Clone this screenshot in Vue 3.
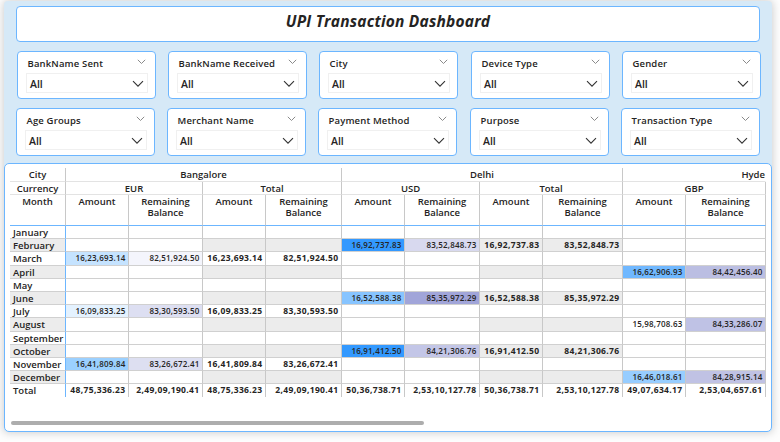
<script setup>
const slicerRows = [
  ['BankName Sent', 'BankName Received', 'City', 'Device Type', 'Gender'],
  ['Age Groups', 'Merchant Name', 'Payment Method', 'Purpose', 'Transaction Type'],
]

const cities = [
  { name: 'Bangalore', span: 4 },
  { name: 'Delhi', span: 4 },
  { name: 'Hyde', span: 2, clipped: true },
]
const currencies = ['EUR', 'Total', 'USD', 'Total', 'GBP']

const rows = [
  { month: 'January' },
  { month: 'February', usd: ['16,92,737.83', '83,52,848.73', '#3399ff', '#d8d9ef'] },
  { month: 'March', eur: ['16,23,693.14', '82,51,924.50', '#c5e3ff', '#f4f5fc'] },
  { month: 'April', gbp: ['16,62,906.93', '84,42,456.40', '#70b8ff', '#bbbee2'] },
  { month: 'May' },
  { month: 'June', usd: ['16,52,588.38', '85,35,972.29', '#87c4ff', '#a1a5d9'] },
  { month: 'July', eur: ['16,09,833.25', '83,30,593.50', '#e4f2ff', '#dddff2'] },
  { month: 'August', gbp: ['15,98,708.63', '84,33,286.07', '#ffffff', '#bfc2e5'] },
  { month: 'September' },
  { month: 'October', usd: ['16,91,412.50', '84,21,306.76', '#3399ff', '#c3c6e7'] },
  { month: 'November', eur: ['16,41,809.84', '83,26,672.41', '#9bd0ff', '#dddff1'] },
  { month: 'December', gbp: ['16,46,018.61', '84,28,915.14', '#97cdff', '#c0c2e4'] },
]
const totals = [
  '48,75,336.23', '2,49,09,190.41', '48,75,336.23', '2,49,09,190.41',
  '50,36,738.71', '2,53,10,127.78', '50,36,738.71', '2,53,10,127.78',
  '49,07,634.17', '2,53,04,657.61',
]

function cellsOf(row) {
  const heat = (v) => [0, 1].map((i) => ({ text: v ? v[i] : '', bg: v ? v[i + 2] : '#ffffff' }))
  const total = (v) => [0, 1].map((i) => ({ text: v ? v[i] : '', total: true }))
  return [...heat(row.eur), ...total(row.eur), ...heat(row.usd), ...total(row.usd), ...heat(row.gbp)]
}
</script>

<template>
  <div class="page">
    <div class="report">
      <header class="title">UPI Transaction Dashboard</header>
      <div v-for="(line, i) in slicerRows" :key="i" class="slicers" :class="{ second: i === 1 }">
        <section v-for="name in line" :key="name" class="slicer">
          <div class="slicer-head">
            <span>{{ name }}</span>
            <svg width="9" height="6" viewBox="0 0 9 6"><path d="M0.8 0.8 4.5 4.5 8.2 0.8" /></svg>
          </div>
          <div class="slicer-box">
            <span>All</span>
            <svg width="12" height="8" viewBox="0 0 12 8"><path d="M1 1.2 6 6.2 11 1.2" /></svg>
          </div>
        </section>
      </div>

      <main class="matrix">
        <div class="grid">
          <div class="cell head first">City</div>
          <div
            v-for="c in cities" :key="c.name" class="cell head"
            :class="{ clipped: c.clipped }" :style="{ gridColumn: 'span ' + c.span }"
          >{{ c.name }}</div>

          <div class="cell head first">Currency</div>
          <div v-for="(c, i) in currencies" :key="i" class="cell head pair">{{ c }}</div>

          <div class="cell head measure first">Month</div>
          <template v-for="n in 5" :key="n">
            <div class="cell head measure">Amount</div>
            <div class="cell head measure">Remaining<br>Balance</div>
          </template>

          <template v-for="(row, r) in rows" :key="row.month">
            <div class="cell month" :class="{ band: r % 2 }">{{ row.month }}</div>
            <div
              v-for="(c, i) in cellsOf(row)" :key="i" class="cell num"
              :class="{ sum: c.total, band: c.total && r % 2 }"
              :style="c.total ? null : { backgroundColor: c.bg }"
            >{{ c.text }}</div>
          </template>

          <div class="cell month last">Total</div>
          <div v-for="(t, i) in totals" :key="i" class="cell num sum last">{{ t }}</div>
        </div>
        <div class="scrollbar"></div>
      </main>
    </div>
  </div>
</template>

<style>
body {
  background: #fdfdfd;
  overflow: hidden;
}
</style>

<style scoped>
* {
  box-sizing: border-box;
}
.page {
  width: 780px;
  height: 442px;
  padding: 1px 8px 10px 4px;
  overflow: hidden;
  font-family: "Open Sans", sans-serif;
  color: #252423;
}
.report {
  height: 431px;
  display: flex;
  flex-direction: column;
  background: #d6e9f7;
  border-radius: 4px;
  box-shadow: 0 0 8px 1px rgba(0, 0, 0, 0.18);
}
.title {
  width: 744px;
  height: 36px;
  margin: 5px 0 0 12px;
  border: 1px solid #6cb6ff;
  border-radius: 4px;
  background: #fff;
  text-align: center;
  font-size: 15.5px;
  letter-spacing: 0.2px;
  font-style: italic;
  font-weight: 700;
  line-height: 29px;
}
.slicers {
  display: grid;
  grid-template-columns: 151px 151px 152px 151px 139px;
  margin: 9px 0 0 13px;
}
.slicers.second {
  margin-left: 12px;
}
.slicer {
  width: 139px;
  height: 48px;
  padding: 5px 7px 0 8px;
  border: 1px solid #6cb6ff;
  border-radius: 4px;
  background: #fff;
}
.slicer-head {
  display: flex;
  justify-content: space-between;
  height: 16px;
  padding: 0 2px 0 1.5px;
  font-size: 9.5px;
  letter-spacing: 0.15px;
  font-weight: 650;
  line-height: 13px;
  white-space: nowrap;
}
.slicer-head svg {
  margin-top: 2px;
}
.slicer-box {
  display: flex;
  justify-content: space-between;
  align-items: center;
  height: 20px;
  padding: 1px 3px 0 3px;
  border: 1px solid #f0f0f0;
  font-size: 10.5px;
  font-weight: 600;
}
svg {
  flex: none;
  fill: none;
  stroke: #8a8a8a;
  stroke-width: 1;
}
.slicer-box svg {
  stroke: #333;
  stroke-width: 1.1;
}
.slicers + .matrix {
  margin-top: 7px;
}
.matrix {
  width: 768px;
  height: 269px;
  padding: 4px 5px 0;
  border: 1px solid #6cb6ff;
  border-radius: 5px;
  background: #fff;
}
.grid {
  display: grid;
  grid-template-columns: 56px 63px 74px 63px 76px 63px 75px 63px 80px 63px 80px;
  grid-template-rows: 14px 13px 31px 13px 13px 14px 13px 13px 13px 13px 14px 13px 13px 13px 13px 13px;
}
.cell {
  min-width: 0;
  border-right: 1px solid #c8c8c8;
  border-bottom: 1px solid #d0d0d0;
  line-height: 13px;
  white-space: nowrap;
}
.head {
  font-size: 9.5px;
  font-weight: 650;
  text-align: center;
  border-bottom-color: #e3e3e3;
}
.pair {
  grid-column: span 2;
}
.clipped {
  text-align: right;
  border-right-color: transparent;
}
.measure {
  line-height: 11px;
  padding-top: 1px;
  border-bottom-color: #6cb6ff;
}
.month {
  padding-left: 3px;
  font-size: 9.5px;
  font-weight: 650;
  border-right-color: #6cb6ff;
}
.num {
  padding-right: 2.5px;
  font-size: 8px;
  letter-spacing: 0.2px;
  font-weight: 600;
  text-align: right;
  line-height: 12px;
}
.sum {
  font-size: 8.5px;
  letter-spacing: 0.35px;
  font-weight: 700;
}
.band {
  background: #ececec;
}
.last {
  border-bottom: 0;
}
.scrollbar {
  width: 413px;
  height: 4px;
  margin: 24px 0 0 1px;
  border-radius: 2px;
  background: #adadad;
}
</style>
